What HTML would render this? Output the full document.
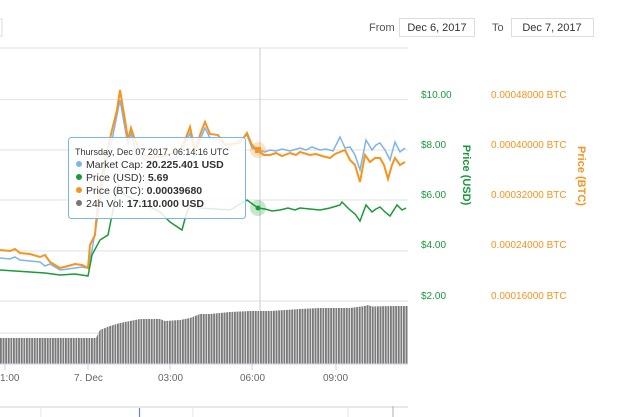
<!DOCTYPE html>
<html><head><meta charset="utf-8"><style>
html,body{margin:0;padding:0;background:#fff;width:640px;height:417px;overflow:hidden;font-family:"Liberation Sans",sans-serif;}
</style></head><body>
<svg width="640" height="417" viewBox="0 0 640 417" xmlns="http://www.w3.org/2000/svg" font-family="Liberation Sans, sans-serif">
<defs>
<pattern id="bars" width="2.6" height="10" patternUnits="userSpaceOnUse">
<rect width="2.6" height="10" fill="#fff"/><rect width="1.9" height="10" fill="#7a7a7a"/>
</pattern>
</defs>
<rect x="-4" y="19" width="6" height="17" fill="#fff" stroke="#ddd"/>
<text x="369" y="31" font-size="11" fill="#555">From</text>
<rect x="399.5" y="18.5" width="75" height="18" fill="#fff" stroke="#ddd"/>
<text x="437" y="31" font-size="11" fill="#333" text-anchor="middle">Dec 6, 2017</text>
<text x="492" y="31" font-size="11" fill="#555">To</text>
<rect x="511.5" y="18.5" width="82" height="18" fill="#fff" stroke="#ddd"/>
<text x="552" y="31" font-size="11" fill="#333" text-anchor="middle">Dec 7, 2017</text>
<g stroke="#e6e6e6" stroke-width="1.2">
<line x1="0" y1="48" x2="408" y2="48"/>
<line x1="0" y1="99.5" x2="408" y2="99.5"/>
<line x1="0" y1="150" x2="408" y2="150"/>
<line x1="0" y1="200" x2="408" y2="200"/>
<line x1="0" y1="251" x2="408" y2="251"/>
<line x1="0" y1="301" x2="408" y2="301"/>
<line x1="0" y1="333" x2="408" y2="333"/>
</g>
<line x1="260" y1="48" x2="260" y2="364" stroke="#ccc" stroke-width="1"/>
<polygon fill="url(#bars)" points="0,364 0,338 96,338 100,330 110,326 120,323 130,321 140,319 160,319 165,321 180,320 190,318 200,314 210,314 230,312 250,311 270,311 300,309 320,308 350,308 365,306 368,305 372,306.5 395,306 408,306 408,364"/>
<line x1="0" y1="364" x2="408" y2="364" stroke="#ccd6eb"/>
<g stroke="#ccd6eb"><line x1="5" y1="364" x2="5" y2="370"/><line x1="88" y1="364" x2="88" y2="370"/><line x1="170" y1="364" x2="170" y2="370"/><line x1="252" y1="364" x2="252" y2="370"/><line x1="336" y1="364" x2="336" y2="370"/></g>
<g font-size="10" fill="#666">
<text x="0" y="381">1:00</text><text x="74" y="381">7. Dec</text><text x="158" y="381">03:00</text><text x="240" y="381">06:00</text><text x="323" y="381">09:00</text>
</g>
<polyline fill="none" stroke="#7cb5ec" stroke-width="1.5" points="0,258 10,259 15,257 20,260 30,261 40,262 45,266 50,264 60,270 68,269 75,268 82,267 88,268 92,250 98,215 105,170 112,140 120,100 125,128 128,145 131,133 135,148 145,160 160,162 175,158 182,150 190,133 195,155 200,140 205,128 210,138 218,140 225,150 247,135 252,148 258,150 265,152 270,150 276,151 282,149 290,151 300,148 306,150 312,147 320,150 326,149 333,151 340,137 345,148 350,147 355,155 360,170 366,140 372,150 376,145 380,143 385,150 390,160 395,142 400,152 405,148"/>
<polyline fill="none" stroke="#f7931e" stroke-width="2" points="0,250 10,251 15,249 20,253 30,254 40,257 45,255 50,262 60,268 68,266 75,264 82,265 88,268 90,245 95,235 98,200 105,160 112,130 117,110 120,90 125,120 128,140 131,128 135,140 140,152 150,158 165,156 180,150 185,140 190,127 195,150 200,135 205,122 210,134 218,135 225,145 240,143 247,133 252,145 258,151 264,155 270,155 276,153 282,156 290,153 296,155 300,152 310,155 316,154 322,156 330,158 335,154 340,152 345,150 350,160 355,165 360,182 365,155 370,162 375,158 380,158 384,165 388,179 392,165 395,158 400,165 405,162"/>
<polyline fill="none" stroke="#1a9a3a" stroke-width="1.5" points="0,270 15,271 30,272 45,273 60,275 75,274 88,276 92,255 100,240 108,235 112,215 118,185 125,195 140,202 160,212 170,222 182,230 186,215 190,205 200,208 230,210 247,200 258,208 265,209 272,211 280,210 288,208 295,210 300,208 310,209 320,210 330,208 340,205 342,202 350,210 355,214 360,221 366,205 372,212 376,209 380,207 385,212 390,216 397,205 402,210 406,208"/>
<circle cx="258" cy="150" r="8" fill="#f7931e" fill-opacity="0.25"/>
<rect x="255" y="147" width="6" height="6" fill="#f7931e"/>
<circle cx="258" cy="208" r="8" fill="#1a9a3a" fill-opacity="0.25"/>
<circle cx="258" cy="208" r="2.5" fill="#1a9a3a"/>
<rect x="68.5" y="137.5" width="177" height="81" rx="3" fill="#fff" fill-opacity="0.85" stroke="#7cb5ec"/>
<text x="75" y="155" font-size="9" fill="#333">Thursday, Dec 07 2017, 06:14:16 UTC</text>
<g font-size="10.5" fill="#333">
<circle cx="79" cy="164" r="3" fill="#7cb5ec"/><text x="86" y="168">Market Cap: <tspan font-weight="bold">20.225.401 USD</tspan></text>
<circle cx="79" cy="177" r="3" fill="#1a9a3a"/><text x="86" y="181">Price (USD): <tspan font-weight="bold">5.69</tspan></text>
<circle cx="79" cy="190" r="3" fill="#f7931e"/><text x="86" y="194">Price (BTC): <tspan font-weight="bold">0.00039680</tspan></text>
<circle cx="79" cy="203" r="3" fill="#777"/><text x="86" y="207">24h Vol: <tspan font-weight="bold">17.110.000 USD</tspan></text>
</g>
<g font-size="10" fill="#1a9a3a">
<text x="421" y="98">$10.00</text><text x="421" y="148">$8.00</text><text x="421" y="198">$6.00</text><text x="421" y="248">$4.00</text><text x="421" y="299">$2.00</text>
</g>
<g font-size="10" fill="#f7931e">
<text x="491" y="98">0.00048000 BTC</text><text x="491" y="148">0.00040000 BTC</text><text x="491" y="198">0.00032000 BTC</text><text x="491" y="248">0.00024000 BTC</text><text x="491" y="299">0.00016000 BTC</text>
</g>
<text transform="translate(463,175) rotate(90)" font-size="11" font-weight="bold" fill="#1a9a3a" text-anchor="middle">Price (USD)</text>
<text transform="translate(578,176) rotate(90)" font-size="11" font-weight="bold" fill="#f7931e" text-anchor="middle">Price (BTC)</text>
<line x1="0" y1="407" x2="408" y2="407" stroke="#e0e0e0" stroke-width="1.5"/>
<g stroke="#e6e6e6"><line x1="41" y1="407" x2="41" y2="417"/><line x1="193" y1="407" x2="193" y2="417"/><line x1="348" y1="407" x2="348" y2="417"/></g>
<line x1="139.5" y1="408" x2="139.5" y2="417" stroke="#6685c2" stroke-width="1.2"/>
<line x1="393" y1="406" x2="393" y2="417" stroke="#bbb" stroke-width="1.2"/>
</svg>
</body></html>
